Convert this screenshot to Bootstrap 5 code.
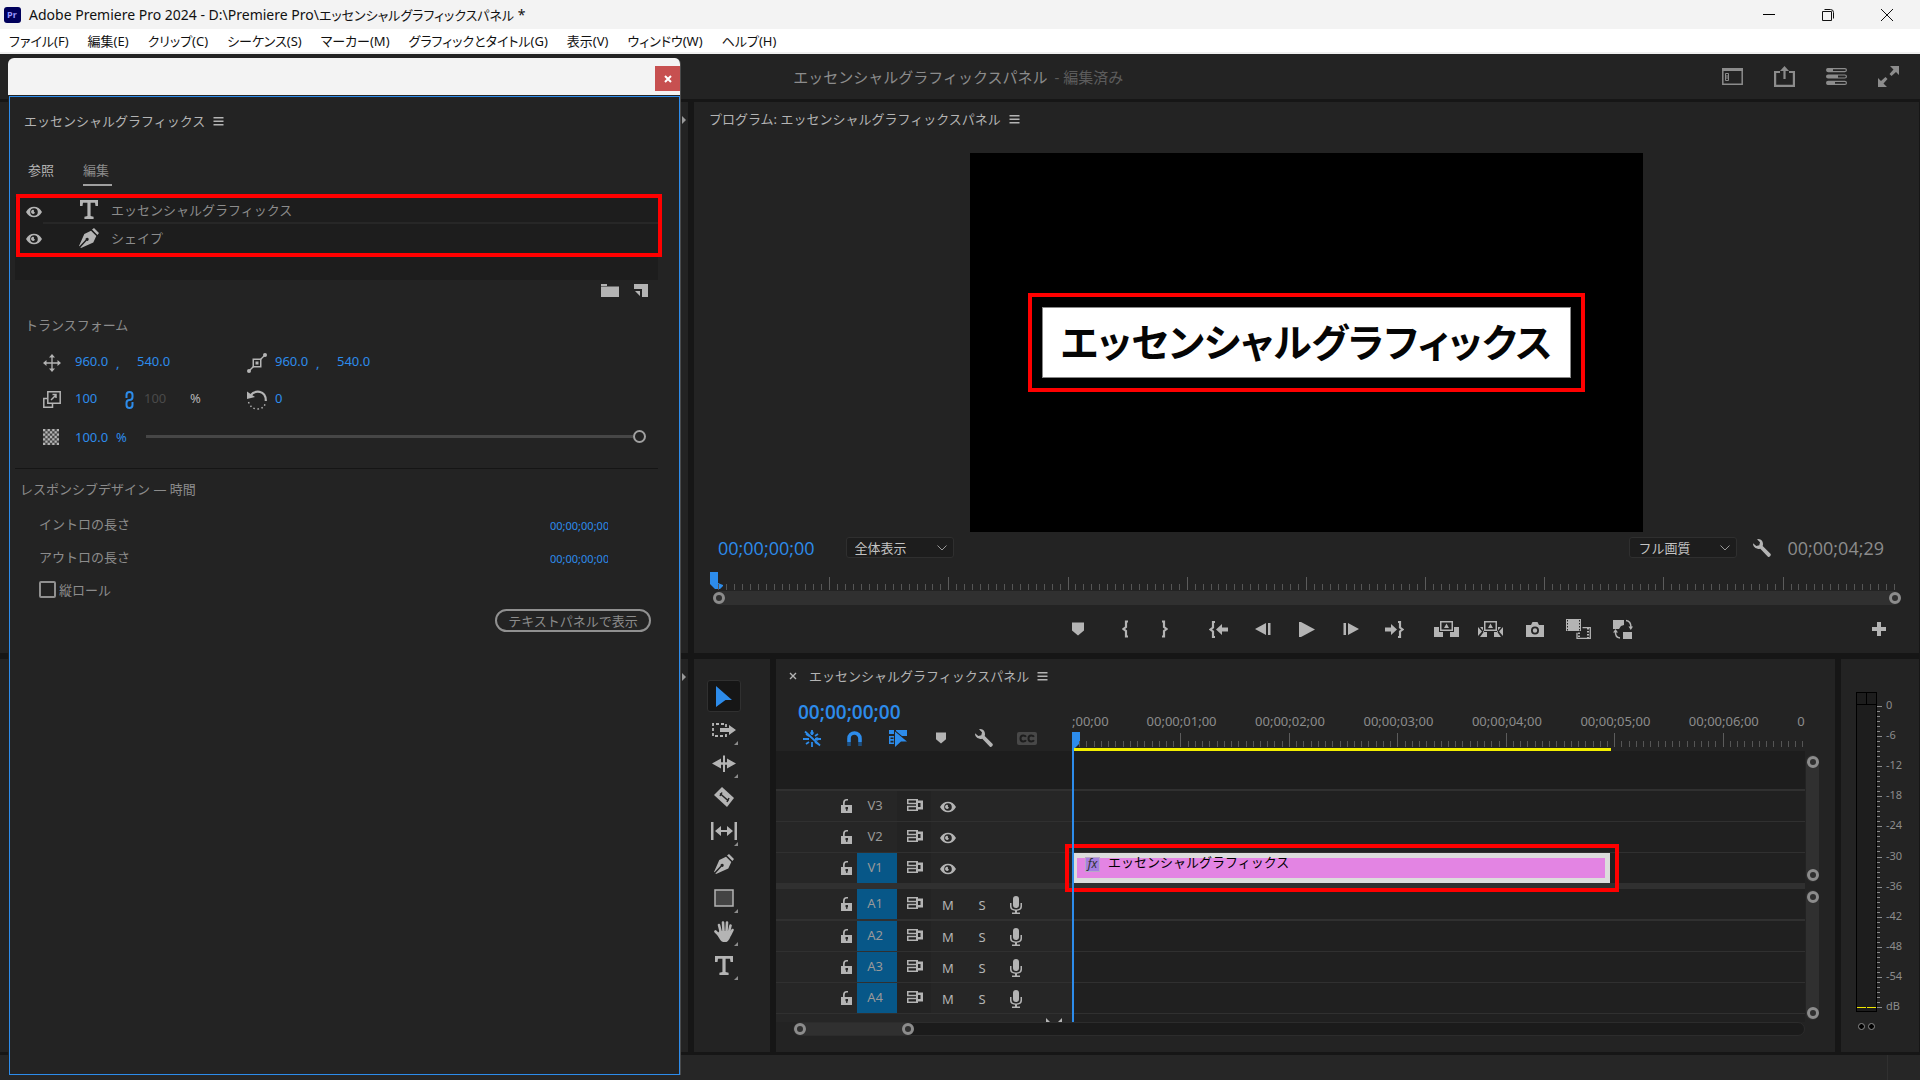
<!DOCTYPE html>
<html lang="ja">
<head>
<meta charset="utf-8">
<meta name="viewport" content="width=device-width, initial-scale=1">
<title>Adobe Premiere Pro 2024</title>
<link href="https://cdn.jsdelivr.net/npm/bootstrap@5.3.0/dist/css/bootstrap.min.css" rel="stylesheet">
<style>
:root{--panel:#232323;--gutter:#161616;--ink:#b4b4b4;--dim:#8c8c8c;--hot:#2d8ceb;--rule:#303030;--red:#f00}
body{height:100vh;overflow:hidden;background:var(--gutter);color:var(--ink);font:13px/20px "Noto Sans","Noto Sans CJK JP",sans-serif}
button,.hot{border:0;background:none;padding:0;color:inherit;font:inherit}
button{display:inline-flex;align-items:center;justify-content:center}
svg{display:block;fill:currentColor;flex:none}
.ln{fill:none;stroke:currentColor}
.titlebar{height:29px;background:#f3f3f3;color:#111;font-size:14px;font-feature-settings:"palt"}
.titlebar .docname{font-size:13px}
.titlebar button{width:59px;height:29px}
.menubar{height:25px;background:#fff;border-bottom:2px solid #f0f0f0;font-size:13px;font-feature-settings:"palt";gap:19px;padding-left:9px}
.menubar a{color:#111;text-decoration:none}
.workspace{display:grid;grid-template-columns:minmax(0,688fr) minmax(0,1225fr);grid-template-rows:45px minmax(0,554fr) minmax(0,399fr);column-gap:6px;margin-right:1px}
.apphead{grid-column:1/3;background:var(--panel);font-size:15px;color:var(--dim);margin-right:-1px}
.apphead .proj{padding-left:calc(41vw + 6px);gap:7px}
.apphead .saved{color:#5c5c5c}
.apphead .acts{padding-right:6px}
.apphead button{width:52px;height:44px}
.pane{background:var(--panel)}
.upper{margin-top:3px}
.lower{margin-top:6px}
.status{height:25px;background:#262626;margin-top:3px}
.status i{width:1px;margin-right:32px;background:#303030}
.edge{color:#999;padding-top:10px}
.edge svg{margin-right:2px}
/* floating window */
.floater{position:absolute;left:8px;top:58px;bottom:5px;width:calc(35vw + 1px);background:var(--panel);border-radius:6px 6px 0 0;border-right:1px solid #4a4a4a;overflow:hidden}
.floater-bar{height:37px;background:#f3f3f3;padding-top:8px}
.floater-bar button{width:25px;height:25px;background:#c75050;color:#fff}
.floater-body{border:1px solid var(--hot);margin:1px 0 0 1px}
.fhead{height:48px;padding-left:14px;gap:8px}
.ftabs{height:52px;padding-left:18px;gap:29px}
.ftabs button{height:30px;border-bottom:2px solid transparent}
.ftabs button.active{color:var(--dim);border-color:#a0a0a0;padding-right:3px}
.layers{height:83px;background:#1d1d1d;margin:0 21px 0 5px;color:var(--dim);position:relative}
.layers .layer{height:27px}
.layers .lrow{border-bottom:2px solid #272727}
.layers button{width:28px;height:29px;color:var(--ink);padding-left:10px}
.layers .layer svg{color:var(--ink)}
.mark-layers{position:absolute;left:1px;right:-4px;top:-3px;height:63px;border:4px solid var(--red);pointer-events:none}
.ltools{height:26px;gap:15px;padding:4px 31px 0 0;align-items:flex-start}
.flabel{height:38px;padding-left:15px;color:var(--dim)}
.prow{height:37px;padding-left:33px;color:var(--ink)}
.pgroup{width:204px}
.ico{width:32px}
.pgroup+.pgroup .ico{width:28px}
.hot{color:var(--hot);width:41px;outline:0}
.pgroup .hot{padding-bottom:3px}
.comma{width:21px;color:var(--hot)}
.pct{padding-bottom:3px}
.w49{width:50px}.w20{width:19px}.w46{width:46px}
.hot.off{color:#4a4a4a}
.opacity-range{appearance:none;-webkit-appearance:none;background:none;height:14px;flex:1;margin:0 33px 0 0;min-width:0}
.opacity-range::-webkit-slider-runnable-track{height:3px;background:linear-gradient(90deg,#464646 calc(100% - 13px),transparent 0)}
.opacity-range::-webkit-slider-thumb{-webkit-appearance:none;width:13px;height:13px;margin-top:-5px;border:2px solid #a0a0a0;border-radius:50%;background:var(--panel)}
.divline{height:1px;background:#151515;margin:13px 21px 0 5px}
.rlabel{height:38px;padding:10px 0 0 10px;color:var(--dim)}
.rrow{height:33px;padding:0 71px 0 29px;color:var(--dim)}
.rrow .hot{width:58px;font-size:11px;padding-top:5px}
.rrow input[type=checkbox]{appearance:none;width:17px;height:17px;border:2px solid #909090;border-radius:2px;margin-right:3px}
.pill{width:156px;height:23px;border:2px solid #909090;border-radius:12px;color:var(--dim);margin:3px 28px 0 0}
/* program monitor */
.phead{height:34px;padding-left:15px;gap:8px}
.video{background:#000;aspect-ratio:16/9;height:100%}
.stagebox{flex:1;min-height:0;margin-top:17px}
.tele{border:4px solid var(--red);padding:10px}
.tele p{background:#fff;color:#050505;border:1px solid #888;margin:0;padding:0 18px;height:71px;line-height:65px;font-size:39px;font-weight:700;font-family:"Noto Sans CJK JP",sans-serif;font-feature-settings:"palt"}
.pctl{height:31px;padding:0 35px 0 24px}
.tc{font:500 18px/24px "Open Sans",sans-serif;color:var(--hot)}
.tc.end{color:#8c8c8c}
.qsel{width:108px;height:21px;appearance:none;border:1px solid #2f2f2f;border-radius:3px;color:#c4c4c4;padding:0 8px;font:inherit;line-height:18px;background:#1d1d1d url("data:image/svg+xml,%3Csvg xmlns='http://www.w3.org/2000/svg' width='10' height='6'%3E%3Cpath d='M.5.5 5 5 9.5.5' fill='none' stroke='%23999'/%3E%3C/svg%3E") no-repeat right 6px center}
.qsel.zoomsel{margin-left:31px}
.ruler{position:relative}
.ruler i{position:absolute;bottom:0;width:1px;height:6px;background:#555}
.ruler i.big{height:13px;background:#5c5c5c}
.ruler span{position:absolute;top:18px;transform:translateX(-50%);color:var(--dim);white-space:nowrap}
.ruler span.start{left:0;transform:none}
.ruler.short{height:27px;margin:0 0 1px 16px}
.zoombar{height:14px;background:#303030;margin:0 18px 0 19px;border-radius:7px}
.ring{width:12px;height:12px;border:3px solid #8c8c8c;border-radius:50%;flex:none}
.flag{position:absolute;left:0;color:var(--hot)}
.transport{height:48px}
.transport button{width:44px;height:32px}
.transport .brace{width:40px}
.transport .wide{width:54px}
.transport .edit{margin-right:18px}
/* bottom */
.tools{width:76px;padding-top:21px}
.toolset{height:301px}
.toolset button{width:34px;height:32px;position:relative}
.toolset button.active{background:#161616;color:var(--hot);border:1px solid #303030;border-radius:3px}
.toolset .more::after{content:"";position:absolute;right:3px;bottom:1px;border:2px solid transparent;border-right-color:#8c8c8c;border-bottom-color:#8c8c8c}
.seqhead{height:34px;padding-left:13px;gap:8px}
.thead{height:58px}
.hcol{width:296px;flex:none}
.thead .tc{font-size:19px;font-weight:600;padding:7px 0 0 22px}
.ticons{padding-left:14px;margin-top:1px}
.ticons button{width:43px;height:26px;color:var(--ink)}
.ticons button.on{color:var(--hot)}
.timeruler{flex:1;overflow:hidden;height:58px}
.timeruler i{bottom:4px}.timeruler i.big{height:14px}
.work{position:absolute;left:2px;bottom:0;height:3px;background:#f2ee00}
.tracks{position:relative}
.blank{height:40px;background:#1d1d1d;border-bottom:2px solid var(--rule)}
.trk{height:31px;border-bottom:1px solid var(--rule);background:#202020}
.trk.thick{height:32px;border-width:2px}
.trk.last{height:36px;border-width:6px}
.trk .hcol{background:#262626;padding-left:59px;height:100%}
.trk .hcol>*{height:100%}
.trk .lk{width:22px;color:var(--ink)}
.trk .nm{width:40px;color:#999;padding:0 4px 2px 0}
.trk.on .nm{background:#075788}
.trk .sy{width:34px;background:#232323;padding:0 0 2px 1px}
.trk .c3{width:34px;padding-top:2px}
.lane{flex:1;position:relative}
.clip{position:absolute;left:2px;top:0;height:30px;background:#e384e3;border:5px solid #dcdcdc;border-left-width:3px;color:#000;gap:8px}
.clip p{margin:-13px 0 0;line-height:20px}
.fxb{width:15px;height:15px;background:#a57fe0;border:1px solid #b9a6c8;font:italic 12px/12px "Noto Sans",sans-serif;margin:-7px 0 0 8px;color:#333}
.mark-clip{position:absolute;left:-7px;top:-9px;height:48px;border:4px solid var(--red)}
.playline{position:absolute;left:296px;top:-3px;bottom:0;width:2px;background:var(--hot)}
.tail{height:8px;background:#202020;overflow:hidden}
.tail .hcol{background:#262626;padding:4px 10px 0 270px}
.vs{width:13px;background:#303030;border-radius:7px;flex:none;padding:1px 0}
.hs{height:14px;background:#1b1b1b;border:1px solid #2c2c2c;border-radius:7px;margin-left:17px}
.hs div{width:120px;height:12px;background:#303030;border-radius:6px}
.meters{width:78px;padding:33px 0 0 15px}
.meter{width:21px;height:320px;border:1px solid #000;background:#1d1d1d;flex:none}
.meter .peak{height:12px;border-bottom:1px solid #000}
.meter b{flex:1}
.meter .peak b+b{border-left:1px solid #000}
.meter .level{flex:1;padding-bottom:3px;gap:1px}
.meter .level b{border-bottom:1px solid #f0e800}
.scale{position:relative;width:40px;height:301px;margin-top:14px;font-size:11px;line-height:14px;color:var(--dim)}
.scale i{position:absolute;left:0;width:3px;height:1px;background:#8c8c8c}
.scale i.big{width:5px}
.scale span{position:absolute;left:9px;transform:translateY(-60%)}
.solo{gap:3px;margin:11px 0 0 2px}
.solo button{width:7px;height:7px;border:1px solid #8c8c8c;border-radius:50%;background:#000}
</style>
<script src="https://cdn.jsdelivr.net/npm/bootstrap@5.3.0/dist/js/bootstrap.bundle.min.js"></script>
</head>
<body class="d-flex flex-column m-0">
<svg width="0" height="0" class="position-absolute" aria-hidden="true">
<symbol id="menu" viewBox="0 0 10 9"><path d="M0 0h10v1.500H0zM0 3.500h10v1.500H0zM0 7h10v1.500H0z"/></symbol>
<symbol id="eye" viewBox="0 0 16 12"><path fill-rule="evenodd" d="M0 6C3.500-1 12.500-1 16 6 12.500 13 3.500 13 0 6zM8 2.200a3.800 3.800 0 1 0 0 7.600 3.800 3.800 0 0 0 0-7.600zM8 4a2 2 0 0 0 1 2.500 2 2 0 1 1-1-2.500z"/></symbol>
<symbol id="type" viewBox="0 0 18 19"><path d="M0 0h18v6h-2.500L15 2.800h-4.400V16l3 .8V19H4.400v-2.200l3-.8V2.800H3L2.500 6H0z"/></symbol>
<symbol id="pen" viewBox="0 0 20 20"><path d="M13 1.500 15 0l5 5-1.600 2zM12 2.700l5.300 5.300-3 6.500L2 20l-.6-.6 6.200-6.600a1.600 1.600 0 1 0-1-1L.5 18.300 0 18 5.300 6z"/></symbol>
<symbol id="lock" viewBox="0 0 11 14"><path d="M2 6V4q0-4 3.700-4H7v1.600H5.700Q3.700 1.600 3.700 4v2H11v8H0V6zM4.500 8v2l.7.600V12h1.200v-1.400L7 10V8z" fill-rule="evenodd"/></symbol>
<symbol id="sync" viewBox="0 0 16 12"><path fill-rule="evenodd" d="M0 0h11v1.500h5v9h-5V12H0V6.700h9V5.300H0zM1.500 1.500v2.300H9V1.500zM1.500 8.200v2.300H9V8.200zM11 4v4h2.500V4z"/></symbol>
<symbol id="mic" viewBox="0 0 12 18"><rect x="3" width="6" height="12" rx="3"/><path d="M0 7h1.500v3q0 3.500 4.500 3.500t4.500-3.500V7H12v3.500q0 3.800-5 4.300V16.500h3V18H2v-1.500h3v-1.700q-5-.5-5-4.300z"/></symbol>
<symbol id="wrench" viewBox="0 0 18 18"><path d="M5.500 0Q9.800.5 10 5q0 1-.3 2l8 8Q18.300 17 16 18q-.7 0-1.300-.5L7.300 9.800Q3 11 .7 7.200 0 6 0 4.200L3.300 7 6.300 6.300 7 3.300 4 .3z"/></symbol>
<symbol id="marker" viewBox="0 0 12 13"><path d="M0 0h12v8l-6 5-6-5z"/></symbol>
<symbol id="br" viewBox="0 0 6 17"><path class="ln" stroke-width="2.200" d="M6 1H4v5.500L1.500 8.500 4 10.500V16h2"/></symbol>
<symbol id="lr" viewBox="0 0 24 14"><path d="M12 0v14" class="ln" stroke-width="2"/><path d="M0 7l9-5v3.800h6V2l9 5-9 5V8.200H9V12z"/></symbol>
</svg>

<header class="titlebar d-flex align-items-center flex-shrink-0">
  <svg class="ms-1 me-2" width="17" height="16" viewBox="0 0 17 16"><rect width="17" height="16" rx="3" fill="#00005b"/><text x="3" y="11" font-size="9" font-weight="700" fill="#9999ff" font-family="Open Sans">Pr</text></svg>
  <span class="flex-grow-1">Adobe Premiere Pro 2024 - D:\Premiere Pro\<span class="docname">エッセンシャルグラフィックスパネル</span> *</span>
  <button aria-label="最小化"><svg width="12" height="12"><path d="M0 5.500h12" stroke="#000"/></svg></button>
  <button aria-label="元に戻す"><svg width="12" height="12"><path class="ln" d="M.5 2.500h9v9h-9zM2.500.5h6q3 0 3 3v6"/></svg></button>
  <button class="me-1" aria-label="閉じる"><svg width="12" height="12"><path class="ln" d="M0 0l12 12M12 0 0 12"/></svg></button>
</header>
<nav class="menubar d-flex align-items-center flex-shrink-0" aria-label="メニュー">
  <a href="#">ファイル(F)</a><a href="#">編集(E)</a><a href="#">クリップ(C)</a><a href="#">シーケンス(S)</a><a href="#">マーカー(M)</a><a href="#">グラフィックとタイトル(G)</a><a href="#">表示(V)</a><a href="#">ウィンドウ(W)</a><a href="#">ヘルプ(H)</a>
</nav>

<main class="workspace flex-grow-1">
  <div class="apphead d-flex align-items-center justify-content-between">
    <div class="proj d-flex text-nowrap"><span>エッセンシャルグラフィックスパネル</span><span class="saved">- 編集済み</span></div>
    <div class="acts d-flex">
    <button aria-label="ワークスペース"><svg width="21" height="17"><path class="ln" stroke-width="1.500" d="M.8.8h19.400v15.400H.8z"/><path d="M0 0h21v3H0z"/><path class="ln" d="M3.500 5.500h3v7h-3zM3.500 8h3M3.500 10h3"/></svg></button>
    <button aria-label="クイック書き出し"><svg width="21" height="21"><path class="ln" stroke-width="2.200" d="M6 6H1.100v13.900h18.800V6H15M10.500 13V4"/><path d="M10.500 0l4.500 5H6z"/></svg></button>
    <button aria-label="進行状況"><svg width="21" height="17" viewBox="0 0 21 17"><g class="ln" stroke-width="1.200"><rect x=".6" y=".6" width="19.800" height="3" rx="1.500"/><rect x=".6" y="7" width="19.800" height="3" rx="1.500"/><rect x=".6" y="13.400" width="19.800" height="3" rx="1.500"/></g><path d="M1 .6h6v3H1zM1 7h11v3H1zM1 13.400h8v3H1z"/></svg></button>
    <button aria-label="フルスクリーン"><svg width="21" height="21"><path d="M12 0h9v9l-3-3-4.500 4-2-2L15.500 3.500zM9 21H0v-9l3 3 4.500-4 2 2L5.500 17.500z"/></svg></button>
    </div>
  </div>

  <div class="pane upper edge d-flex justify-content-end align-items-start"><svg width="4" height="8" class="mt-1"><path d="M0 0l4 4-4 4z"/></svg></div>

  <section class="pane upper d-flex flex-column" aria-label="プログラムモニター">
    <div class="phead d-flex align-items-center"><span>プログラム: エッセンシャルグラフィックスパネル</span><button aria-label="パネルメニュー"><svg width="11" height="9"><use href="#menu"/></svg></button></div>
    <div class="stagebox d-flex justify-content-center">
      <div class="video d-flex align-items-center justify-content-center"><div class="tele"><p>エッセンシャルグラフィックス</p></div></div>
    </div>
    <div class="pctl d-flex align-items-center">
      <span class="tc">00;00;00;00</span>
      <select class="qsel zoomsel" aria-label="ズームレベル"><option>全体表示</option></select>
      <select class="qsel ms-auto me-3" aria-label="再生時の解像度"><option>フル画質</option></select>
      <button aria-label="設定" class="me-3"><svg width="18" height="18"><use href="#wrench"/></svg></button>
      <span class="tc end">00;00;04;29</span>
    </div>
    <div class="ruler short" id="r1"><svg class="flag" style="top:9px" width="13" height="17"><path d="M0 0h8v11l5 2v1l-3 3H5L0 12z"/></svg></div>
    <div class="zoombar d-flex align-items-center justify-content-between"><i class="ring"></i><i class="ring"></i></div>
    <div class="transport d-flex align-items-center">
      <div class="d-flex justify-content-end" style="flex:1">
        <button class="wide" aria-label="マーカーを追加"><svg width="12" height="14"><use href="#marker"/></svg></button>
        <button class="brace" aria-label="インをマーク"><svg width="6" height="18"><use href="#br"/></svg></button>
        <button class="brace me-2" aria-label="アウトをマーク"><svg width="6" height="18"><use href="#br" width="6" height="18" transform="translate(6 0) scale(-1 1)"/></svg></button>
        <button aria-label="インへ移動" class="ms-1"><svg width="19" height="17"><use href="#br" width="6" height="17"/><path d="M7 8.500 13 3v3.500h6v4h-6V14z"/></svg></button>
        <button aria-label="1 フレーム前へ"><svg width="16" height="12"><path d="M0 6l11-6v12zM13 0h2.500v12H13z"/></svg></button>
      </div>
      <button aria-label="再生"><svg width="16" height="15"><path d="M0 0h2l14 7.500L2 15H0z"/></svg></button>
      <div class="d-flex" style="flex:1">
        <button aria-label="1 フレーム先へ"><svg width="16" height="12"><path d="M5 0l11 6L5 12zM.5 0H3v12H.5z"/></svg></button>
        <button aria-label="アウトへ移動" class="me-2"><svg width="19" height="17"><use href="#br" width="6" height="17" transform="translate(19 0) scale(-1 1)"/><path d="M12 8.500 6 3v3.500H0v4h6V14z"/></svg></button>
        <button aria-label="リフト"><svg width="25" height="16"><path fill-rule="evenodd" d="M6 0h13v10H6zM7.500 1.500v7h10v-7z"/><path d="M12.500 2.500 15 7h-5zM0 6h5v5h4v5H0zM25 6h-5v5h-4v5h9z"/></svg></button>
        <button aria-label="抽出"><svg width="25" height="16"><path fill-rule="evenodd" d="M6 0h13v10H6zM7.500 1.500v7h10v-7z"/><path d="M12.500 2.500 15 7h-5zM0 6l4 4.500L0 15zM25 6l-4 4.500 4 4.500zM2 6h3v5h4v5H2l4-5.500zM23 6h-3v5h-4v5h7l-4-5.500z"/></svg></button>
        <button aria-label="フレームを書き出し"><svg width="18" height="15"><path fill-rule="evenodd" d="M0 3h5l1.500-3h5L13 3h5v12H0zM9 4.500a4 4 0 1 0 0 8 4 4 0 0 0 0-8zM9 6.300a2.200 2.200 0 1 1 0 4.400 2.200 2.200 0 0 1 0-4.400z"/></svg></button>
        <button aria-label="比較表示"><svg width="25" height="20"><path d="M0 0h15v12H0z"/><path d="M1.500 1v11M13.500 1v11" stroke="#232323" stroke-dasharray="1.500 1.500"/><path class="ln" stroke-width="1.300" d="M16.500 8.600h7.800v10.700H11v-5.500"/><path class="ln" stroke-width="2" stroke-dasharray="1.500 1.500" d="M13 13.500V19M22 9v10"/></svg></button>
        <button aria-label="プロキシの切り替え"><svg width="20" height="20"><path d="M0 1h11v5l-3 1-2 3H0zM10 13h9v7h-9z"/><path class="ln" stroke-width="1.500" d="M13 1.500q5 .5 5 7M7 19q-5-.5-4.500-7"/><path d="M15.500 7.500H20L17.800 11zM0 13.500l2.500-3.500L5 13.500z"/></svg></button>
        <button aria-label="ボタンエディター" class="ms-auto edit"><svg width="14" height="14"><path d="M5 0h4v5h5v4H9v5H5V9H0V5h5z"/></svg></button>
      </div>
    </div>
  </section>

  <div class="pane lower edge d-flex justify-content-end align-items-start"><svg width="4" height="8" class="mt-1"><path d="M0 0l4 4-4 4z"/></svg></div>

  <div class="lower d-flex" style="gap:6px">
    <section class="pane tools d-flex justify-content-center align-items-start" aria-label="ツール">
      <div class="toolset d-flex flex-column justify-content-between me-3">
        <button class="active" aria-label="選択ツール"><svg width="16" height="21"><path d="M0 0l16 14H9.500L0 21z"/></svg></button>
        <button class="more" aria-label="トラックの前方選択"><svg width="24" height="14"><path class="ln" stroke-width="1.800" stroke-dasharray="3 2" d="M14 4V1H1v12h13v-3"/><path d="M8 5h9V2l7 5-7 5V9H8z"/></svg></button>
        <button class="more" aria-label="リップルツール"><svg width="24" height="17" viewBox="0 -1 24 16"><use href="#lr" width="24" height="14"/><path d="M11 -1h2v17h-2z"/></svg></button>
        <button aria-label="レーザーツール"><svg width="20" height="20"><path d="M8 0l12 11-7 9L0 8z"/><path class="ln" style="stroke:#232323" stroke-width="1.500" d="M6 6.500l8.500 7.500M8 5.500 6 9M15 11l-2 4"/></svg></button>
        <button class="more" aria-label="スリップツール"><svg width="26" height="18"><path d="M0 0h2.500v18H0zM23.500 0H26v18h-2.500zM4 9l6-5v4h6V4l6 5-6 5v-4h-6v4z"/></svg></button>
        <button aria-label="ペンツール"><svg width="20" height="20"><use href="#pen"/></svg></button>
        <button class="more" aria-label="長方形ツール"><svg width="20" height="18"><path d="M1 1h18v16H1z" fill="#444" stroke="#b4b4b4" stroke-width="1.500"/></svg></button>
        <button class="more" aria-label="手のひらツール"><svg width="20" height="21"><g class="ln" stroke-width="2.600" stroke-linecap="round"><path d="M5 4l2 8M9 1.500l.5 9M13 1.500l-.5 9M16.500 4.500 15 11M1.500 10.500l5 5M18.500 9l-2.500 5"/></g><path d="M5.500 10h11l1 2q-2 8-5 9H9q-3-1-6-8z"/></svg></button>
        <button class="more" aria-label="横書き文字ツール"><svg width="18" height="19"><use href="#type"/></svg></button>
      </div>
    </section>

    <section class="pane flex-grow-1" style="min-width:0" aria-label="タイムライン">
      <div class="seqhead d-flex align-items-center"><button aria-label="シーケンスを閉じる"><svg width="8" height="8"><path class="ln" stroke-width="1.400" d="M1 1l6 6M7 1 1 7"/></svg></button><span class="ms-1">エッセンシャルグラフィックスパネル</span><button aria-label="パネルメニュー"><svg width="11" height="9"><use href="#menu"/></svg></button></div>
      <div class="d-flex pe-3">
        <div class="flex-grow-1" style="min-width:0">
          <div class="thead d-flex">
            <div class="hcol"><div class="tc">00;00;00;00</div>
              <div class="ticons d-flex">
                <button class="on" aria-label="ネスト"><svg width="18" height="17"><g class="ln" stroke-width="1.800"><path d="M9 0v5M0 9h6M12 9h6M9 12v5M3 4l3 2M15 4l-3 2M3 14l3-2M15 14l-3-2M2 1.500 17 15.500"/></g><circle cx="9" cy="3" r="1.800"/><circle cx="14" cy="9" r="1.800"/></svg></button>
                <button class="on" aria-label="スナップ"><svg width="15" height="15"><path class="ln" stroke-width="3.600" d="M2 11V7.500a5.500 5.500 0 0 1 11 0V11"/><path d="M.2 11h3.600v4H.2zM11.200 11h3.600v4h-3.600z" fill="#1d4f80"/></svg></button>
                <button class="on" aria-label="リンクされた選択"><svg width="18" height="17"><path fill-rule="evenodd" d="M0 0h5v4H0zM0 6h5v8H0zM1.500 7.500v1.500h3V7.500zM1.500 10.800v1.700h3v-1.700zM7 0h11v6h-5L7 1zM6 1.500l12 10h-6l-6 5.500z"/></svg></button>
                <button aria-label="マーカーを追加"><svg width="10" height="12"><use href="#marker"/></svg></button>
                <button aria-label="タイムライン表示設定"><svg width="18" height="18"><use href="#wrench"/></svg></button>
                <button aria-label="キャプション"><svg width="20" height="13"><rect width="20" height="13" rx="2" fill="#484848"/><path class="ln" style="stroke:#1d1d1d" stroke-width="2" d="M9 4.800Q8.200 3.500 6.200 3.500 3.500 3.500 3.500 6.500t2.700 3Q8.200 9.500 9 8.200M17 4.800q-.8-1.300-2.800-1.300-2.700 0-2.700 3t2.700 3q2 0 2.800-1.300"/></svg></button>
              </div></div>
            <div class="ruler timeruler" id="r2"><svg class="flag" style="top:39px" width="8" height="17"><path d="M0 0h8v11l-5 5H0z"/></svg><span class="start">;00;00</span><div class="work" id="work"></div></div>
          </div>
          <div class="tracks">
            <div class="blank"></div>
            <div id="rows"></div>
            <div class="tail d-flex"><div class="hcol d-flex justify-content-between"><svg width="5" height="5"><path d="M0 0l5 5H0z"/></svg><svg width="5" height="5"><path d="M5 0v5H0z"/></svg></div></div>
            <div class="playline"></div>
          </div>
          <div class="hs"><div class="d-flex align-items-center justify-content-between"><i class="ring"></i><i class="ring"></i></div></div>
        </div>
        <div class="d-flex flex-column" style="padding:62px 0 16px 1px">
          <div class="vs d-flex flex-column align-items-center justify-content-between" style="height:127px"><i class="ring"></i><i class="ring"></i></div>
          <div class="vs d-flex flex-column align-items-center justify-content-between flex-grow-1 mt-2"><i class="ring"></i><i class="ring"></i></div>
        </div>
      </div>
    </section>

    <section class="pane meters" aria-label="オーディオメーター">
      <div class="d-flex">
        <div class="meter d-flex flex-column"><div class="peak d-flex"><b></b><b></b></div><div class="level d-flex"><b></b><b></b></div></div>
        <div class="scale" id="scale"></div>
      </div>
      <div class="solo d-flex"><button aria-label="左チャンネルをソロ"></button><button aria-label="右チャンネルをソロ"></button></div>
    </section>
  </div>
</main>
<footer class="status d-flex justify-content-end flex-shrink-0"><i></i></footer>

<aside class="floater d-flex flex-column" aria-label="エッセンシャルグラフィックス">
  <div class="floater-bar d-flex justify-content-end"><button aria-label="閉じる"><svg width="8" height="8"><path class="ln" stroke-width="2" d="M1 1l6 6M7 1 1 7"/></svg></button></div>
  <div class="floater-body flex-grow-1">
    <div class="fhead d-flex align-items-center"><span>エッセンシャルグラフィックス</span><button aria-label="パネルメニュー"><svg width="11" height="9"><use href="#menu"/></svg></button></div>
    <div class="ftabs d-flex align-items-center"><button>参照</button><button class="active">編集</button></div>
    <ul class="layers list-unstyled">
      <li class="layer d-flex"><button aria-label="表示"><svg width="16" height="12"><use href="#eye"/></svg></button><div class="lrow flex-grow-1 d-flex align-items-center"><svg width="18" height="19" style="margin:0 13px 0 37px"><use href="#type"/></svg>エッセンシャルグラフィックス</div></li>
      <li class="layer d-flex"><button aria-label="表示"><svg width="16" height="12"><use href="#eye"/></svg></button><div class="flex-grow-1 d-flex align-items-center"><svg width="20" height="20" style="margin:0 12px 0 36px"><use href="#pen"/></svg>シェイプ</div></li>
      <li class="mark-layers" aria-hidden="true"></li>
    </ul>
    <div class="ltools d-flex justify-content-end"><button aria-label="グループを作成"><svg width="18" height="13"><path d="M0 0h6v2H0zM0 2.500h18V13H0z"/></svg></button><button aria-label="新規レイヤー"><svg width="14" height="13"><path d="M0 0h14v13H8V5H0zM1 7h5v5z"/></svg></button></div>
    <div class="flabel d-flex align-items-center">トランスフォーム</div>
    <div class="prow d-flex align-items-center">
      <div class="pgroup d-flex align-items-center"><span class="ico"><svg width="18" height="18"><path class="ln" stroke-width="1.300" d="M9 2v14M2 9h14"/><path d="M9 0l3 3.500H6zM9 18l3-3.500H6zM0 9l3.500-3v6zM18 9l-3.500-3v6z"/></svg></span><input class="hot" aria-label="位置 X" value="960.0"><span class="comma">,</span><input class="hot" aria-label="位置 Y" value="540.0"></div>
      <div class="pgroup d-flex align-items-center"><span class="ico"><svg width="20" height="20"><path class="ln" stroke-width="1.300" d="M2 18 18 2"/><path d="M5.500 5.500h9v9h-9z" fill="#b4b4b4"/><path d="M7 7h6v6H7z" fill="#232323"/><path d="M8.500 8.500h3v3h-3z"/><circle cx="18" cy="2" r="2"/><circle cx="2" cy="18" r="2"/></svg></span><input class="hot" aria-label="アンカー X" value="960.0"><span class="comma">,</span><input class="hot" aria-label="アンカー Y" value="540.0"></div>
    </div>
    <div class="prow d-flex align-items-center">
      <div class="pgroup d-flex align-items-center"><span class="ico"><svg width="18" height="17"><path class="ln" stroke-width="1.500" d="M4.800.8h12.400v11.400H4.800zM4 7.500H.8v8.700h8.700V13M8 9l5-5M9.500 3.500H13V7"/></svg></span><input class="hot w49" aria-label="スケール" value="100"><button class="w20 justify-content-start" aria-label="縦横比を固定" style="color:var(--hot)"><svg width="9" height="18"><path class="ln" stroke-width="2" d="M1.500 7V4a3 3 0 0 1 6 0v2q0 3-3 3M7.500 11v3a3 3 0 0 1-6 0v-2q0-3 3-3"/></svg></button><input class="hot off w46" aria-label="スケール (幅)" value="100"><span class="pct">%</span></div>
      <div class="pgroup d-flex align-items-center"><span class="ico"><svg width="20" height="20"><path class="ln" stroke-width="2.200" d="M3.500 5.500Q7 1 12.500 1.800q6.500 1.500 6.300 9.200"/><path d="M0 1.500 8 7 0 9z"/><path class="ln" stroke-width="1.400" stroke-dasharray="1.500 2.500" d="M1.500 12Q4 19 10.500 19T19 12"/></svg></span><input class="hot" aria-label="回転" value="0"></div>
    </div>
    <div class="prow d-flex align-items-center">
      <span class="ico"><svg width="16" height="16" viewBox="0 0 16 16"><path d="M0 0h16v16H0z" fill="#444"/><path class="ln" stroke-width="2.300" stroke-dasharray="2.300 2.300" d="M0 1.100h16M0 5.700h16M0 10.300h16M0 14.900h16"/><path class="ln" stroke-width="2.300" stroke-dasharray="2.300 2.300" stroke-dashoffset="2.300" d="M0 3.400h16M0 8h16M0 12.600h16"/></svg></span>
      <input class="hot" aria-label="不透明度" value="100.0"><label for="opac" style="color:var(--hot);width:30px">%</label>
      <input type="range" class="opacity-range" id="opac" value="100">
    </div>
    <div class="divline"></div>
    <div class="rlabel">レスポンシブデザイン — 時間</div>
    <div class="rrow d-flex align-items-center justify-content-between"><label for="intro">イントロの長さ</label><input class="hot" id="intro" value="00;00;00;00"></div>
    <div class="rrow d-flex align-items-center justify-content-between"><label for="outro">アウトロの長さ</label><input class="hot" id="outro" value="00;00;00;00"></div>
    <div class="rrow d-flex align-items-center"><input type="checkbox" id="roll"><label for="roll">縦ロール</label></div>
    <div class="d-flex justify-content-end"><button class="pill">テキストパネルで表示</button></div>
  </div>
</aside>

<script>
const add=(p,tag,cls,css,txt)=>{const e=document.createElement(tag);if(cls)e.className=cls;e.style.cssText=css;if(txt)e.textContent=txt;p.append(e)};
// program monitor ruler: a long tick each fifteen frames
for(let i=1;i<=149;i++) add(r1,'i',i%15?'':'big',`left:${i*7.945/1209*100}%`);
// sequence ruler, in seconds
const sec=108.6/734*100;
for(let i=1;i<=101;i++) add(r2,'i',i%15?'':'big',`left:${i*sec/15}%`);
for(let s=1;s<8;s++) add(r2,'span','',`left:${s*sec+.15}%`,`00;00;0${s};00`);
work.style.width=sec*4.955+'%';
const svg=(n,w,h)=>`<svg width="${w}" height="${h}"><use href="#${n}"/></svg>`;
[['V3',''],['V2',''],['V1','on last'],['A1','on thick'],['A2','on'],['A3','on'],['A4','on']].forEach(([n,c])=>{
  const v=n[0]==='V';
  rows.insertAdjacentHTML('beforeend',`<div class="trk d-flex ${c}"><div class="hcol d-flex align-items-center">
  <button class="lk" aria-label="${n} をロック">${svg('lock',11,14)}</button><button class="nm">${n}</button><button class="sy" aria-label="${n} 同期ロック">${svg('sync',16,12)}</button>
  ${v?`<button class="c3" aria-label="${n} の出力">${svg('eye',16,12)}</button>`:`<button class="c3">M</button><button class="c3">S</button><button class="c3" aria-label="${n} ボイスオーバー">${svg('mic',12,18)}</button>`}
  </div><div class="lane">${n==='V1'?`<div class="clip d-flex align-items-center" style="width:${sec*4.945}%"><span class="fxb text-center">fx</span><p>エッセンシャルグラフィックス</p></div><div class="mark-clip" style="width:${sec*5.11}%"></div>`:''}</div></div>`);
});
for(let d=0;d<=60;d++) add(scale,'i',d%6?'':'big',`top:${d/60*100}%`);
['0','-6','-12','-18','-24','-30','-36','-42','-48','-54','dB'].forEach((t,i)=>add(scale,'span','',`top:${i*10}%`,t));
</script>
</body>
</html>
